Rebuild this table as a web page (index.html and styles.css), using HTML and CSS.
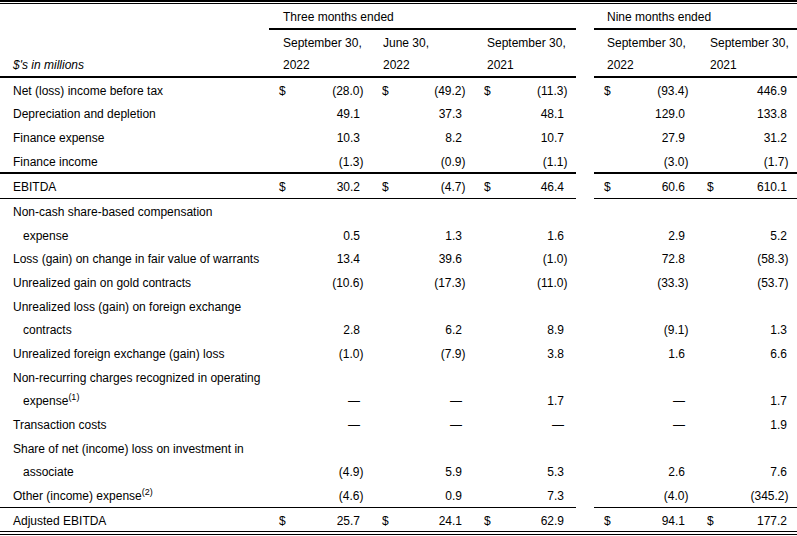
FILE: index.html
```html
<!DOCTYPE html>
<html lang="en">
<head>
<meta charset="utf-8">
<title>EBITDA reconciliation</title>
<link rel="stylesheet" href="styles.css">
</head>
<body>
<div class="frame">
<table class="recon">
  <colgroup>
    <col class="w-label">
    <col class="w-c1">
    <col class="w-c2">
    <col class="w-c3">
    <col class="w-gap">
    <col class="w-c4">
    <col class="w-c5">
  </colgroup>
  <thead>
    <tr class="periods">
      <th class="lbl"></th>
      <th class="period p-three" colspan="3">Three months ended</th>
      <th class="gap"></th>
      <th class="period p-nine" colspan="2">Nine months ended</th>
    </tr>
    <tr class="dates rule2">
      <th class="lbl units">$'s in millions</th>
      <th class="date d1">September 30,<br>2022</th>
      <th class="date d2">June 30,<br>2022</th>
      <th class="date">September 30,<br>2021</th>
      <th class="gap"></th>
      <th class="date">September 30,<br>2022</th>
      <th class="date">September 30,<br>2021</th>
    </tr>
  </thead>
  <tbody>
    <tr>
      <td class="lbl">Net (loss) income before tax</td>
      <td class="num"><span class="cur">$</span>(28.0<span class="rp">)</span></td>
      <td class="num"><span class="cur">$</span>(49.2<span class="rp">)</span></td>
      <td class="num"><span class="cur">$</span>(11.3<span class="rp">)</span></td>
      <td class="gap"></td>
      <td class="num"><span class="cur">$</span>(93.4<span class="rp">)</span></td>
      <td class="num last">446.9</td>
    </tr>
    <tr>
      <td class="lbl">Depreciation and depletion</td>
      <td class="num">49.1</td>
      <td class="num">37.3</td>
      <td class="num">48.1</td>
      <td class="gap"></td>
      <td class="num">129.0</td>
      <td class="num last">133.8</td>
    </tr>
    <tr>
      <td class="lbl">Finance expense</td>
      <td class="num">10.3</td>
      <td class="num">8.2</td>
      <td class="num">10.7</td>
      <td class="gap"></td>
      <td class="num">27.9</td>
      <td class="num last">31.2</td>
    </tr>
    <tr class="rule2">
      <td class="lbl">Finance income</td>
      <td class="num">(1.3<span class="rp">)</span></td>
      <td class="num">(0.9<span class="rp">)</span></td>
      <td class="num">(1.1<span class="rp">)</span></td>
      <td class="gap"></td>
      <td class="num">(3.0<span class="rp">)</span></td>
      <td class="num last">(1.7<span class="rp">)</span></td>
    </tr>
    <tr class="rule1">
      <td class="lbl">EBITDA</td>
      <td class="num"><span class="cur">$</span>30.2</td>
      <td class="num"><span class="cur">$</span>(4.7<span class="rp">)</span></td>
      <td class="num"><span class="cur">$</span>46.4</td>
      <td class="gap"></td>
      <td class="num"><span class="cur">$</span>60.6</td>
      <td class="num last"><span class="cur">$</span>610.1</td>
    </tr>
    <tr>
      <td class="lbl">Non-cash share-based compensation</td>
      <td class="num"></td>
      <td class="num"></td>
      <td class="num"></td>
      <td class="gap"></td>
      <td class="num"></td>
      <td class="num last"></td>
    </tr>
    <tr>
      <td class="lbl indent">expense</td>
      <td class="num">0.5</td>
      <td class="num">1.3</td>
      <td class="num">1.6</td>
      <td class="gap"></td>
      <td class="num">2.9</td>
      <td class="num last">5.2</td>
    </tr>
    <tr>
      <td class="lbl">Loss (gain) on change in fair value of warrants</td>
      <td class="num">13.4</td>
      <td class="num">39.6</td>
      <td class="num">(1.0<span class="rp">)</span></td>
      <td class="gap"></td>
      <td class="num">72.8</td>
      <td class="num last">(58.3<span class="rp">)</span></td>
    </tr>
    <tr>
      <td class="lbl">Unrealized gain on gold contracts</td>
      <td class="num">(10.6<span class="rp">)</span></td>
      <td class="num">(17.3<span class="rp">)</span></td>
      <td class="num">(11.0<span class="rp">)</span></td>
      <td class="gap"></td>
      <td class="num">(33.3<span class="rp">)</span></td>
      <td class="num last">(53.7<span class="rp">)</span></td>
    </tr>
    <tr>
      <td class="lbl">Unrealized loss (gain) on foreign exchange</td>
      <td class="num"></td>
      <td class="num"></td>
      <td class="num"></td>
      <td class="gap"></td>
      <td class="num"></td>
      <td class="num last"></td>
    </tr>
    <tr>
      <td class="lbl indent">contracts</td>
      <td class="num">2.8</td>
      <td class="num">6.2</td>
      <td class="num">8.9</td>
      <td class="gap"></td>
      <td class="num">(9.1<span class="rp">)</span></td>
      <td class="num last">1.3</td>
    </tr>
    <tr>
      <td class="lbl">Unrealized foreign exchange (gain) loss</td>
      <td class="num">(1.0<span class="rp">)</span></td>
      <td class="num">(7.9<span class="rp">)</span></td>
      <td class="num">3.8</td>
      <td class="gap"></td>
      <td class="num">1.6</td>
      <td class="num last">6.6</td>
    </tr>
    <tr>
      <td class="lbl">Non-recurring charges recognized in operating</td>
      <td class="num"></td>
      <td class="num"></td>
      <td class="num"></td>
      <td class="gap"></td>
      <td class="num"></td>
      <td class="num last"></td>
    </tr>
    <tr>
      <td class="lbl indent">expense<sup>(1)</sup></td>
      <td class="num">—</td>
      <td class="num">—</td>
      <td class="num">1.7</td>
      <td class="gap"></td>
      <td class="num">—</td>
      <td class="num last">1.7</td>
    </tr>
    <tr>
      <td class="lbl">Transaction costs</td>
      <td class="num">—</td>
      <td class="num">—</td>
      <td class="num">—</td>
      <td class="gap"></td>
      <td class="num">—</td>
      <td class="num last">1.9</td>
    </tr>
    <tr>
      <td class="lbl">Share of net (income) loss on investment in</td>
      <td class="num"></td>
      <td class="num"></td>
      <td class="num"></td>
      <td class="gap"></td>
      <td class="num"></td>
      <td class="num last"></td>
    </tr>
    <tr>
      <td class="lbl indent">associate</td>
      <td class="num">(4.9<span class="rp">)</span></td>
      <td class="num">5.9</td>
      <td class="num">5.3</td>
      <td class="gap"></td>
      <td class="num">2.6</td>
      <td class="num last">7.6</td>
    </tr>
    <tr class="rule1">
      <td class="lbl">Other (income) expense<sup>(2)</sup></td>
      <td class="num">(4.6<span class="rp">)</span></td>
      <td class="num">0.9</td>
      <td class="num">7.3</td>
      <td class="gap"></td>
      <td class="num">(4.0<span class="rp">)</span></td>
      <td class="num last">(345.2<span class="rp">)</span></td>
    </tr>
    <tr class="total">
      <td class="lbl">Adjusted EBITDA</td>
      <td class="num"><span class="cur">$</span>25.7</td>
      <td class="num"><span class="cur">$</span>24.1</td>
      <td class="num"><span class="cur">$</span>62.9</td>
      <td class="gap"></td>
      <td class="num"><span class="cur">$</span>94.1</td>
      <td class="num last"><span class="cur">$</span>177.2</td>
    </tr>
  </tbody>
</table>
</div>
</body>
</html>
```

FILE: styles.css
```css
html, body {
  margin: 0;
  padding: 0;
  background: #fff;
}

body {
  width: 797px;
  height: 536px;
  overflow: hidden;
  font-family: "Liberation Sans", Arial, sans-serif;
  font-size: 12px;
  color: #000;
}

.frame {
  width: 797px;
  border-top: 2px solid #000;
  border-bottom: 1px solid #000;
  padding-top: 1px;
  padding-bottom: 2px;
}

.recon {
  width: 797px;
  table-layout: fixed;
  border-collapse: separate;
  border-spacing: 0;
  border-top: 1px solid #000;
}

.w-label { width: 269px; }
.w-c1 { width: 103px; }
.w-c2 { width: 102px; }
.w-c3 { width: 102px; }
.w-gap { width: 18px; }
.w-c4 { width: 103px; }
.w-c5 { width: 100px; }

.recon th,
.recon td {
  padding: 3px 0 0 0;
  font-weight: normal;
  text-align: left;
  line-height: 20.67px;
  white-space: nowrap;
  vertical-align: middle;
}

.recon .lbl {
  padding-left: 13px;
}

.recon .lbl.indent {
  padding-left: 23px;
}

.recon .units {
  font-style: italic;
  vertical-align: bottom;
}

/* period headings */
.recon .period {
  border-bottom: 2px solid #000;
}

.recon .p-three {
  padding-left: 14px;
}

.recon .p-nine {
  padding-left: 13px;
}

/* date headings */
.recon .dates th {
  line-height: 22px;
  padding-top: 2px;
  padding-bottom: 0;
}

.recon .dates .date {
  padding-left: 13px;
}

.recon .dates .d1 {
  padding-left: 14px;
}

.recon .dates .d2 {
  padding-left: 11px;
}

.recon .dates .lbl {
  padding-left: 13px;
}

/* numbers */
.recon .num {
  text-align: right;
  padding-left: 10px;
  padding-right: 12px;
}

.recon .num.last {
  padding-right: 10px;
}

.cur {
  float: left;
}

.rp {
  margin-right: -3.5px;
}

.last .rp {
  margin-right: -1.5px;
}

sup {
  font-size: 9px;
  line-height: 0;
  vertical-align: 5px;
}

/* rules */
.rule2 > *:not(.gap) {
  border-bottom: 2px solid #000;
}

.rule1 > *:not(.gap) {
  border-bottom: 1px solid #000;
}

.total > * {
  border-bottom: 1px solid #000;
}
```
